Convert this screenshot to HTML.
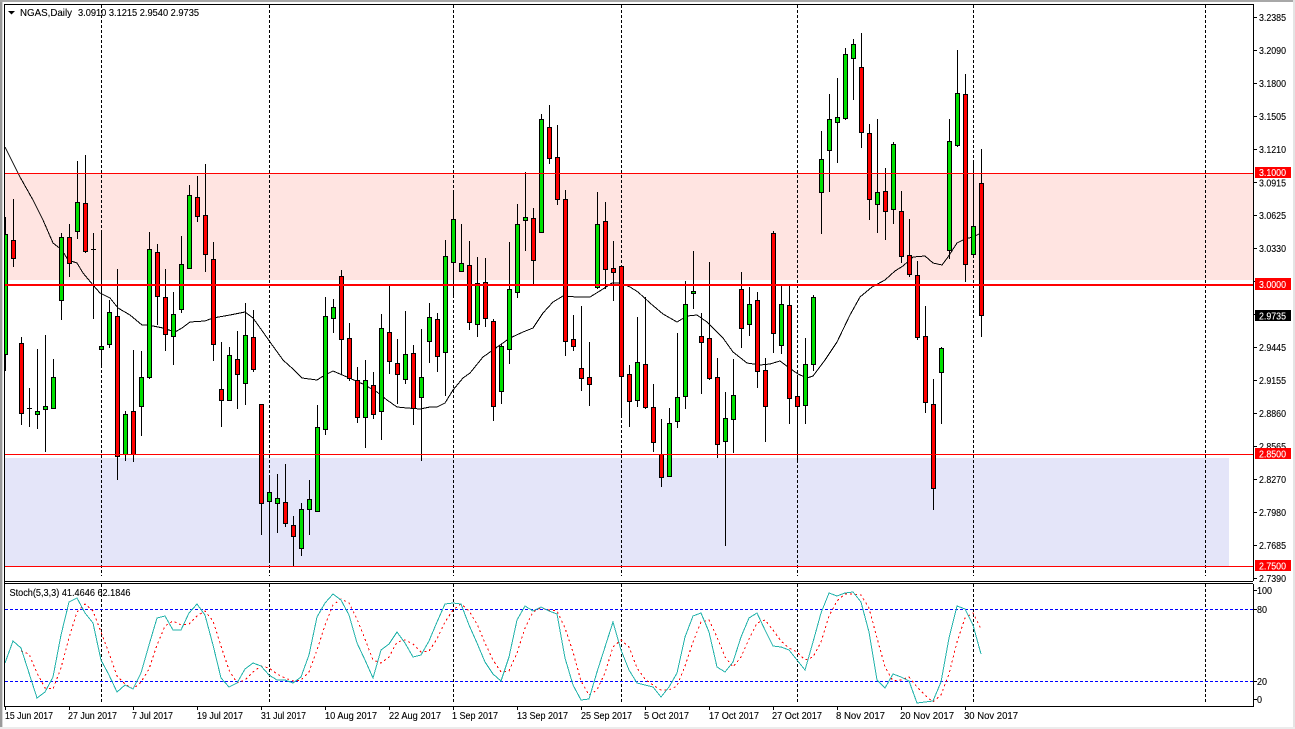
<!DOCTYPE html>
<html><head><meta charset="utf-8"><title>NGAS,Daily</title>
<style>
html,body{margin:0;padding:0;background:#fff;width:1295px;height:729px;overflow:hidden}
svg{display:block}
text{font-family:"Liberation Sans",sans-serif;font-size:10.4px;fill:#000;stroke:#000;stroke-width:.12px}
text.w{fill:#fff;stroke:#fff}
</style></head><body>
<svg width="1295" height="729" viewBox="0 0 1295 729" xmlns="http://www.w3.org/2000/svg">
<rect width="1295" height="729" fill="#fff"/>
<!-- zones -->
<rect x="5" y="174" width="1248" height="106" fill="#FFE4E1"/>
<rect x="5" y="458" width="1224" height="108" fill="#E4E5F9"/>
<!-- vertical grid -->
<path shape-rendering="crispEdges" stroke="#000" stroke-dasharray="3 2" fill="none" d="M101.500 5V576M269.500 5V576M453.500 5V576M621.500 5V576M797.500 5V576M973.500 5V576M1205.500 5V576M101.500 584V703M269.500 584V703M453.500 584V703M621.500 584V703M797.500 584V703M973.500 584V703M1205.500 584V703"/>
<!-- MA -->
<polyline fill="none" stroke="#000" stroke-width="1" shape-rendering="crispEdges" points="5,147 20,177 33,200 43,220 53,243 62,250 68,260 77,263 83,273 93,285 100,293 110,298 118,308 130,315 142,325 148,325 163,328 175,332 182,328 190,322 205,321 213,318 230,315 245,312 253,318 263,332 270,342 283,360 293,369 302,378 317,380 325,375 333,371 347,377 363,384 377,392 387,400 397,407 407,408 420,409 430,407 437,407 445,403 453,390 463,378 470,373 483,357 493,350 510,338 523,332 533,328 543,313 553,302 563,296 577,297 590,297 603,289 612,283 620,283 630,287 638,292 650,303 663,314 677,322 687,316 697,315 707,322 723,338 733,352 747,363 760,365 770,364 780,361 788,367 798,374 807,378 813,376 825,360 837,342 850,315 860,297 872,287 885,280 895,271 903,266 913,257 925,256 933,263 942,265 948,257 957,243 965,239 973,237 981,233"/>
<!-- wicks -->
<path shape-rendering="crispEdges" stroke="#000" fill="none" d="M5.500 217V371M13.500 199V267M21.500 337V425M29.500 388V427M27 408.500h5M37.500 349V429M45.500 335V452M53.500 359V409M61.500 233V320M69.500 224V277M77.500 161V239M85.500 155V253M93.500 233V319M91 249.500h5M101.500 232V367M109.500 300V348M117.500 269V480M125.500 411V461M133.500 350V462M141.500 351V436M149.500 232V379M157.500 244V325M165.500 269V351M173.500 292V365M181.500 236V313M189.500 185V269M197.500 176V222M205.500 164V272M213.500 242V361M221.500 342V427M229.500 347V400M237.500 331V409M245.500 303V405M253.500 310V372M261.500 404V535M269.500 477V560M277.500 474V533M285.500 464V527M293.500 516V566M301.500 503V556M309.500 480V535M317.500 405V511M325.500 297V435M333.500 299V333M341.500 270V375M349.500 323V381M357.500 367V423M365.500 360V448M373.500 372V419M381.500 314V440M389.500 285V374M397.500 339V404M405.500 311V384M413.500 345V425M421.500 329V461M429.500 303V363M437.500 313V372M445.500 240V396M453.500 190V295M461.500 224V272M469.500 241V330M477.500 257V337M485.500 258V327M493.500 319V421M501.500 344V404M509.500 242V364M517.500 204V298M525.500 172V251M533.500 208V284M541.500 114V232M549.500 105V164M557.500 125V205M565.500 190V356M573.500 315V351M581.500 306V391M589.500 342V406M597.500 192V289M605.500 202V289M613.500 241V301M621.500 266V415M629.500 365V427M637.500 317V407M645.500 297V409M653.500 384V452M661.500 419V487M669.500 408V477M677.500 333V428M685.500 281V409M693.500 251V309M701.500 313V394M709.500 262V380M717.500 358V458M725.500 392V546M733.500 359V453M741.500 272V348M749.500 287V336M757.500 292V388M765.500 358V442M773.500 231V353M781.500 286V354M789.500 286V424M797.500 375V463M805.500 338V424M813.500 295V371M821.500 131V234M829.500 94V192M837.500 78V163M845.500 48V120M853.500 39V100M861.500 33V148M869.500 124V220M877.500 119V233M885.500 168V240M893.500 142V224M901.500 191V263M909.500 219V277M917.500 261V340M925.500 306V413M933.500 379V510M941.500 347V424M949.500 119V259M957.500 50V147M965.500 74V282M973.500 160V258M981.500 149V337"/>
<!-- green bodies -->
<path shape-rendering="crispEdges" stroke="#000" fill="#00E000" d="M3.500 234.500h4V354.500h-4zM35.500 411.500h4V414.500h-4zM43.500 406.500h4V409.500h-4zM51.500 377.500h4V408.500h-4zM59.500 237.500h4V300.500h-4zM75.500 202.500h4V231.500h-4zM99.500 346.500h4V349.500h-4zM107.500 312.500h4V344.500h-4zM123.500 414.500h4V454.500h-4zM139.500 377.500h4V406.500h-4zM147.500 249.500h4V377.500h-4zM171.500 314.500h4V336.500h-4zM179.500 264.500h4V309.500h-4zM187.500 195.500h4V268.500h-4zM227.500 355.500h4V400.500h-4zM243.500 335.500h4V383.500h-4zM267.500 492.500h4V501.500h-4zM275.500 498.500h4V503.500h-4zM299.500 509.500h4V548.500h-4zM307.500 499.500h4V509.500h-4zM315.500 427.500h4V511.500h-4zM323.500 316.500h4V429.500h-4zM331.500 307.500h4V318.500h-4zM363.500 380.500h4V417.500h-4zM379.500 328.500h4V411.500h-4zM403.500 354.500h4V379.500h-4zM419.500 377.500h4V397.500h-4zM427.500 317.500h4V341.500h-4zM443.500 256.500h4V352.500h-4zM451.500 219.500h4V262.500h-4zM459.500 263.500h4V271.500h-4zM475.500 283.500h4V324.500h-4zM499.500 346.500h4V391.500h-4zM507.500 289.500h4V349.500h-4zM515.500 224.500h4V292.500h-4zM523.500 217.500h4V220.500h-4zM539.500 119.500h4V232.500h-4zM595.500 224.500h4V287.500h-4zM635.500 362.500h4V400.500h-4zM667.500 423.500h4V476.500h-4zM675.500 397.500h4V421.500h-4zM683.500 304.500h4V396.500h-4zM691.500 291.500h4V293.500h-4zM723.500 418.500h4V441.500h-4zM731.500 395.500h4V419.500h-4zM747.500 304.500h4V324.500h-4zM779.500 304.500h4V345.500h-4zM803.500 364.500h4V405.500h-4zM811.500 297.500h4V364.500h-4zM819.500 159.500h4V192.500h-4zM827.500 119.500h4V150.500h-4zM835.500 117.500h4V122.500h-4zM843.500 54.500h4V118.500h-4zM851.500 44.500h4V58.500h-4zM875.500 192.500h4V204.500h-4zM891.500 144.500h4V209.500h-4zM939.500 348.500h4V372.500h-4zM947.500 141.500h4V250.500h-4zM955.500 93.500h4V145.500h-4zM971.500 226.500h4V254.500h-4z"/>
<!-- red bodies -->
<path shape-rendering="crispEdges" stroke="#000" fill="#F00" d="M11.500 240.500h4V258.500h-4zM19.500 343.500h4V413.500h-4zM67.500 237.500h4V263.500h-4zM83.500 203.500h4V251.500h-4zM115.500 316.500h4V456.500h-4zM131.500 411.500h4V454.500h-4zM155.500 252.500h4V296.500h-4zM163.500 297.500h4V334.500h-4zM195.500 197.500h4V216.500h-4zM203.500 215.500h4V254.500h-4zM211.500 259.500h4V344.500h-4zM219.500 389.500h4V400.500h-4zM235.500 359.500h4V374.500h-4zM251.500 337.500h4V369.500h-4zM259.500 404.500h4V503.500h-4zM283.500 502.500h4V523.500h-4zM291.500 525.500h4V536.500h-4zM339.500 276.500h4V339.500h-4zM347.500 338.500h4V378.500h-4zM355.500 380.500h4V417.500h-4zM371.500 385.500h4V414.500h-4zM387.500 332.500h4V361.500h-4zM395.500 363.500h4V374.500h-4zM411.500 353.500h4V408.500h-4zM435.500 319.500h4V356.500h-4zM467.500 265.500h4V322.500h-4zM483.500 282.500h4V318.500h-4zM491.500 321.500h4V406.500h-4zM531.500 218.500h4V260.500h-4zM547.500 127.500h4V158.500h-4zM555.500 157.500h4V199.500h-4zM563.500 199.500h4V341.500h-4zM571.500 339.500h4V346.500h-4zM579.500 368.500h4V378.500h-4zM587.500 377.500h4V384.500h-4zM603.500 221.500h4V269.500h-4zM611.500 268.500h4V272.500h-4zM619.500 266.500h4V376.500h-4zM627.500 374.500h4V401.500h-4zM643.500 364.500h4V407.500h-4zM651.500 407.500h4V442.500h-4zM659.500 454.500h4V477.500h-4zM699.500 336.500h4V342.500h-4zM707.500 338.500h4V378.500h-4zM715.500 377.500h4V444.500h-4zM739.500 289.500h4V328.500h-4zM755.500 300.500h4V371.500h-4zM763.500 370.500h4V406.500h-4zM771.500 233.500h4V333.500h-4zM787.500 305.500h4V398.500h-4zM795.500 396.500h4V406.500h-4zM859.500 67.500h4V132.500h-4zM867.500 133.500h4V199.500h-4zM883.500 191.500h4V211.500h-4zM899.500 211.500h4V256.500h-4zM907.500 255.500h4V274.500h-4zM915.500 275.500h4V337.500h-4zM923.500 336.500h4V402.500h-4zM931.500 404.500h4V488.500h-4zM963.500 94.500h4V264.500h-4zM979.500 183.500h4V315.500h-4z"/>
<!-- red levels -->
<rect x="5" y="173" width="1249" height="1" fill="#F00"/>
<rect x="5" y="454" width="1249" height="1" fill="#F00"/>
<rect x="5" y="566" width="1249" height="1" fill="#F00"/>
<rect x="5" y="284" width="1249" height="2" fill="#F00"/>
<!-- stochastic levels -->
<path shape-rendering="crispEdges" stroke="#0000FF" stroke-dasharray="3 2" fill="none" d="M5 609.500H1253M5 681.500H1253"/>
<!-- signal -->
<polyline fill="none" stroke="#F00" stroke-width="1" stroke-dasharray="2 3" shape-rendering="crispEdges" points="21,651 29,654 37,673 45,688 53,689 61,668 69,638 77,612 85,604 93,611 101,632 109,653 117,676 125,684 133,689 141,682 149,669 157,645 165,626 173,621 181,625 189,624 197,616 205,611 213,621 221,646 229,670 237,683 245,680 253,672 261,666 269,668 277,674 285,678 293,681 301,680 309,672 317,650 325,625 333,605 341,599 349,603 357,619 365,639 373,660 381,663 389,657 397,642 405,640 413,644 421,652 429,651 437,639 445,622 453,610 461,604 469,611 477,624 485,643 493,660 501,672 509,671 517,653 525,628 533,612 541,608 549,610 557,611 565,628 573,652 581,681 589,695 597,690 605,673 613,647 621,640 629,647 637,668 645,679 653,685 661,690 669,690 677,686 685,666 693,642 701,622 709,620 717,637 725,657 733,667 741,657 749,639 757,623 765,620 773,630 781,641 789,648 797,652 805,660 813,657 821,642 829,616 837,601 845,594 853,594 861,595 869,608 877,638 885,667 893,681 901,680 909,677 917,687 925,695 933,702 941,695 949,674 957,642 965,618 973,613 981,629"/>
<!-- main stochastic -->
<polyline fill="none" stroke="#20B2AA" stroke-width="1" shape-rendering="crispEdges" points="5,663 13,641 21,648 29,673 37,698 45,692 53,677 61,635 69,602 77,598 85,613 93,623 101,660 109,675 117,692 125,685 133,689 141,673 149,645 157,618 165,616 173,630 181,630 189,613 197,604 205,615 213,645 221,678 229,687 237,683 245,669 253,663 261,666 269,675 277,680 285,680 293,683 301,677 309,655 317,617 325,603 333,594 341,600 349,615 357,643 365,660 373,678 381,650 389,644 397,632 405,643 413,657 421,655 429,641 437,622 445,604 453,603 461,604 469,625 477,643 485,662 493,674 501,681 509,657 517,620 525,606 533,611 541,607 549,611 557,614 565,658 573,685 581,700 589,699 597,672 605,647 613,622 621,650 629,670 637,683 645,685 653,687 661,697 669,687 677,673 685,637 693,616 701,613 709,632 717,667 725,672 733,662 741,637 749,618 757,613 765,630 773,646 781,647 789,650 797,660 805,670 813,642 821,613 829,593 837,596 845,593 853,592 861,602 869,632 877,680 885,688 893,674 901,677 909,681 917,703 925,702 933,701 941,682 949,638 957,606 965,609 973,625 981,654"/>
<!-- outer chrome -->
<rect x="0" y="0" width="4" height="729" fill="#fff"/>
<rect x="0" y="0" width="2" height="729" fill="#9a9a9a"/>
<rect x="2" y="0" width="1" height="729" fill="#d8d8d8"/>
<rect x="0" y="0" width="1295" height="2" fill="#a8a8a8"/>
<rect x="1293" y="0" width="2" height="729" fill="#e4e4e4"/>
<rect x="0" y="727" width="1295" height="2" fill="#ececec"/>
<!-- frame -->
<path shape-rendering="crispEdges" stroke="#000" fill="none" d="M4.500 4V707M4 4.500H1254M4 581.500H1253M4 583.500H1253M4 706.500H1254M1253.500 4V581M1253.500 584V707"/>
<!-- axis ticks -->
<path shape-rendering="crispEdges" stroke="#000" fill="none" d="M1254 17.500h3M1254 50.500h3M1254 83.500h3M1254 116.500h3M1254 149.500h3M1254 182.500h3M1254 215.500h3M1254 248.500h3M1254 281.500h3M1254 314.500h3M1254 347.500h3M1254 380.500h3M1254 413.500h3M1254 446.500h3M1254 479.500h3M1254 512.500h3M1254 545.500h3M1254 578.500h3M1254 590.500h3M1254 609.500h3M1254 681.500h3M1254 699.500h3M5.500 707v3M69.500 707v3M133.500 707v3M197.500 707v3M261.500 707v3M325.500 707v3M389.500 707v3M453.500 707v3M517.500 707v3M581.500 707v3M645.500 707v3M709.500 707v3M773.500 707v3M837.500 707v3M901.500 707v3M965.500 707v3"/>
<!-- title -->
<path d="M8 11h7l-3.500 3.500z" fill="#000"/>
<text x="20" y="16" textLength="52" lengthAdjust="spacingAndGlyphs">NGAS,Daily</text>
<text x="78" y="16" textLength="121" lengthAdjust="spacingAndGlyphs">3.0910 3.1215 2.9540 2.9735</text>
<text x="9.500" y="596" textLength="121" lengthAdjust="spacingAndGlyphs">Stoch(5,3,3) 41.4646 62.1846</text>
<!-- price labels -->
<g>
<text x="1259" y="21" textLength="27" lengthAdjust="spacingAndGlyphs">3.2385</text>
<text x="1259" y="54" textLength="27" lengthAdjust="spacingAndGlyphs">3.2090</text>
<text x="1259" y="87" textLength="27" lengthAdjust="spacingAndGlyphs">3.1800</text>
<text x="1259" y="120" textLength="27" lengthAdjust="spacingAndGlyphs">3.1505</text>
<text x="1259" y="153" textLength="27" lengthAdjust="spacingAndGlyphs">3.1210</text>
<text x="1259" y="186.500" textLength="27" lengthAdjust="spacingAndGlyphs">3.0915</text>
<text x="1259" y="219" textLength="27" lengthAdjust="spacingAndGlyphs">3.0625</text>
<text x="1259" y="252" textLength="27" lengthAdjust="spacingAndGlyphs">3.0330</text>
<text x="1259" y="285" textLength="27" lengthAdjust="spacingAndGlyphs">3.0040</text>
<text x="1259" y="351" textLength="27" lengthAdjust="spacingAndGlyphs">2.9445</text>
<text x="1259" y="384" textLength="27" lengthAdjust="spacingAndGlyphs">2.9155</text>
<text x="1259" y="417" textLength="27" lengthAdjust="spacingAndGlyphs">2.8860</text>
<text x="1259" y="450" textLength="27" lengthAdjust="spacingAndGlyphs">2.8565</text>
<text x="1259" y="483" textLength="27" lengthAdjust="spacingAndGlyphs">2.8270</text>
<text x="1259" y="516" textLength="27" lengthAdjust="spacingAndGlyphs">2.7980</text>
<text x="1259" y="549" textLength="27" lengthAdjust="spacingAndGlyphs">2.7685</text>
<text x="1259" y="582" textLength="27" lengthAdjust="spacingAndGlyphs">2.7390</text>
</g>
<rect x="1255" y="167" width="36" height="11" fill="#F00"/>
<text class="w" x="1259" y="176" textLength="27" lengthAdjust="spacingAndGlyphs">3.1000</text>
<rect x="1255" y="278" width="36" height="12" fill="#F00"/>
<text class="w" x="1259" y="288" textLength="27" lengthAdjust="spacingAndGlyphs">3.0000</text>
<rect x="1255" y="310" width="36" height="11" fill="#000"/>
<text class="w" x="1259" y="319.500" textLength="27" lengthAdjust="spacingAndGlyphs">2.9735</text>
<rect x="1255" y="448" width="36" height="11" fill="#F00"/>
<text class="w" x="1259" y="457.500" textLength="27" lengthAdjust="spacingAndGlyphs">2.8500</text>
<rect x="1255" y="560" width="36" height="11" fill="#F00"/>
<text class="w" x="1259" y="569.500" textLength="27" lengthAdjust="spacingAndGlyphs">2.7500</text>
<!-- stoch labels -->
<text x="1257" y="594" textLength="15" lengthAdjust="spacingAndGlyphs">100</text>
<text x="1257" y="613" textLength="10" lengthAdjust="spacingAndGlyphs">80</text>
<text x="1257" y="685" textLength="10" lengthAdjust="spacingAndGlyphs">20</text>
<text x="1257" y="703" textLength="5" lengthAdjust="spacingAndGlyphs">0</text>
<!-- date labels -->
<text x="5" y="719" textLength="48" lengthAdjust="spacingAndGlyphs">15 Jun 2017</text>
<text x="68" y="719" textLength="49" lengthAdjust="spacingAndGlyphs">27 Jun 2017</text>
<text x="132" y="719" textLength="41" lengthAdjust="spacingAndGlyphs">7 Jul 2017</text>
<text x="197" y="719" textLength="46" lengthAdjust="spacingAndGlyphs">19 Jul 2017</text>
<text x="261" y="719" textLength="45" lengthAdjust="spacingAndGlyphs">31 Jul 2017</text>
<text x="325" y="719" textLength="52" lengthAdjust="spacingAndGlyphs">10 Aug 2017</text>
<text x="389" y="719" textLength="52" lengthAdjust="spacingAndGlyphs">22 Aug 2017</text>
<text x="452" y="719" textLength="46" lengthAdjust="spacingAndGlyphs">1 Sep 2017</text>
<text x="517" y="719" textLength="51" lengthAdjust="spacingAndGlyphs">13 Sep 2017</text>
<text x="581" y="719" textLength="51" lengthAdjust="spacingAndGlyphs">25 Sep 2017</text>
<text x="644" y="719" textLength="45" lengthAdjust="spacingAndGlyphs">5 Oct 2017</text>
<text x="709" y="719" textLength="50" lengthAdjust="spacingAndGlyphs">17 Oct 2017</text>
<text x="772" y="719" textLength="50" lengthAdjust="spacingAndGlyphs">27 Oct 2017</text>
<text x="836" y="719" textLength="49" lengthAdjust="spacingAndGlyphs">8 Nov 2017</text>
<text x="900" y="719" textLength="54" lengthAdjust="spacingAndGlyphs">20 Nov 2017</text>
<text x="964" y="719" textLength="54" lengthAdjust="spacingAndGlyphs">30 Nov 2017</text>
</svg>
</body></html>
